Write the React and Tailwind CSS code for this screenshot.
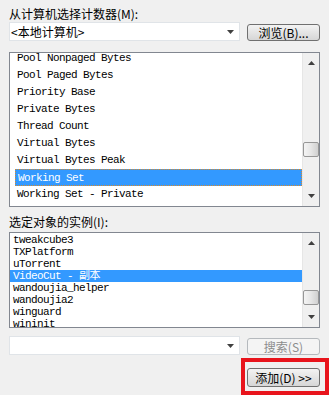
import React from 'react';

const counters = [
  'Pool Nonpaged Bytes',
  'Pool Paged Bytes',
  'Priority Base',
  'Private Bytes',
  'Thread Count',
  'Virtual Bytes',
  'Virtual Bytes Peak',
  'Working Set',
  'Working Set - Private',
];

const instances = [
  'tweakcube3',
  'TXPlatform',
  'uTorrent',
  'VideoCut - 副本',
  'wandoujia_helper',
  'wandoujia2',
  'winguard',
  'wininit',
];

function Arrow({ up }) {
  return (
    <svg width="7" height="4" viewBox="0 0 7 4" className="block">
      {up ? <path d="M3.5 0 L7 4 L0 4 Z" fill="#404040" /> : <path d="M0 0 L7 0 L3.5 4 Z" fill="#404040" />}
    </svg>
  );
}

function ScrollBar({ thumbTop, thumbHeight }) {
  return (
    <div className="relative w-[17px] h-full bg-[#f0f0f0] border-l border-[#e6e6e6] flex flex-col items-center justify-between py-[8px]">
      <Arrow up />
      <div
        className="absolute left-0 w-[16px] rounded-[2px] border border-[#979797] bg-gradient-to-r from-[#f4f4f4] via-[#e6e6e6] to-[#d0d0d0]"
        style={{ top: thumbTop, height: thumbHeight }}
      />
      <Arrow />
    </div>
  );
}

function Combo({ text }) {
  return (
    <div className="w-[231px] h-[19px] bg-white border border-[#e0e4e8] flex items-center justify-between pl-[1px] pr-[5px]">
      <span className="text-[12px] leading-[17px] text-black">{text}</span>
      <Arrow />
    </div>
  );
}

function Button({ children, disabled, className = '' }) {
  return (
    <div
      className={`w-[73px] rounded-[3px] border flex items-center justify-center text-[12px] ${
        disabled
          ? 'border-[#b5b9bd] bg-[#f4f4f4] text-[#8c8c8c]'
          : 'border-[#707070] bg-gradient-to-b from-[#f3f3f3] to-[#d6d6d6] text-black'
      } ${className}`}
    >
      {children}
    </div>
  );
}

export default function App() {
  return (
    <div className="w-[329px] h-[395px] bg-[#f0f0f0] relative overflow-hidden pl-[9px] font-['Noto_Sans_CJK_SC',sans-serif]">
      <div className="mt-[7px] h-[14px] text-[12px] leading-[14px] text-black">从计算机选择计数器(M):</div>

      <div className="mt-[1px] flex items-start gap-[7px]">
        <Combo text="<本地计算机>" />
        <Button className="h-[17px] mt-[2px] leading-[15px]">浏览(B)...</Button>
      </div>

      <div className="mt-[11px] w-[311px] h-[155px] border border-[#828790] bg-white flex">
        <div className="flex-1 overflow-hidden">
          <div className="-mt-[3px] font-['Liberation_Mono','Noto_Sans_CJK_SC',monospace] text-[11px] tracking-[-0.6px]">
            {counters.map((c, i) => (
              <div
                key={c}
                className={`ml-[5px] h-[17px] pl-[2px] leading-[17px] whitespace-nowrap ${
                  i === 7 ? 'bg-[#3399ff] text-white border border-dotted border-[#d98a2a] leading-[15px] pl-[1px]' : 'text-black'
                }`}
              >
                {c}
              </div>
            ))}
          </div>
        </div>
        <ScrollBar thumbTop={89} thumbHeight={15} />
      </div>

      <div className="mt-[8px] h-[14px] text-[12px] leading-[14px] text-black">选定对象的实例(I):</div>

      <div className="mt-[3px] w-[311px] h-[96px] border border-[#828790] bg-white flex">
        <div className="flex-1 overflow-hidden pt-[1px]">
          <div className="font-['Liberation_Mono','Noto_Sans_CJK_SC',monospace] text-[11px] tracking-[-0.6px]">
            {instances.map((c, i) => (
              <div
                key={c}
                className={`h-[12px] pl-[3px] leading-[12px] whitespace-nowrap ${
                  i === 3 ? 'bg-[#3399ff] text-white' : 'text-black'
                }`}
              >
                {c}
              </div>
            ))}
          </div>
        </div>
        <ScrollBar thumbTop={57} thumbHeight={15} />
      </div>

      <div className="mt-[8px] flex items-start gap-[7px]">
        <Combo text="" />
        <Button disabled className="h-[17px] mt-[2px] leading-[15px]">搜索(S)</Button>
      </div>

      <div className="mt-[13px] ml-[238px]">
        <Button className="h-[19px] leading-[17px]">添加(D) &gt;&gt;</Button>
      </div>

      <div className="absolute left-[241px] top-[358px] w-[88px] h-[37px] border-[4px] border-[#e8141c] border-r-0 border-b-0" />
      <div className="absolute left-[241px] top-[358px] w-[88px] h-[37px] border-[4px] border-[#e8141c]" />
    </div>
  );
}
